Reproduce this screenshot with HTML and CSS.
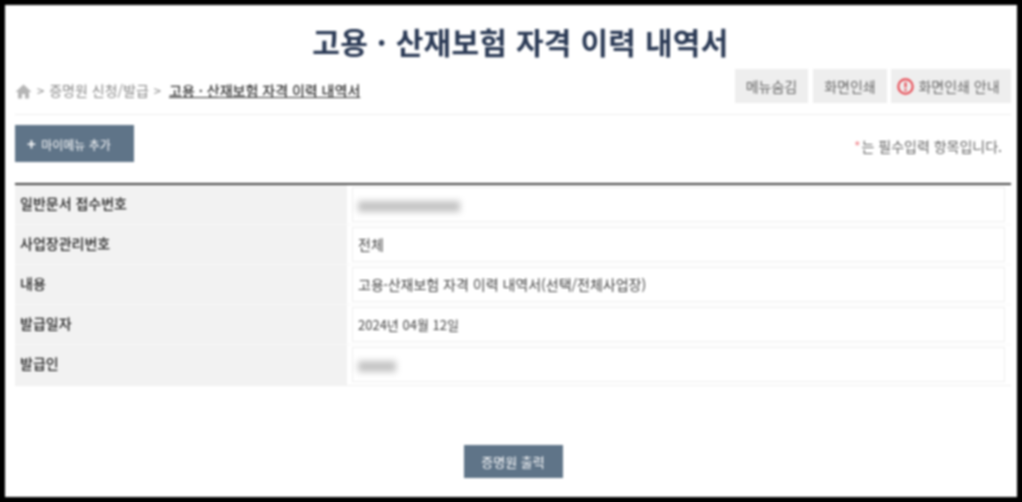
FILE: index.html
```html
<!DOCTYPE html>
<html lang="ko">
<head>
<meta charset="UTF-8">
<meta name="viewport" content="width=device-width, initial-scale=1.0">
<title>고용·산재보험 자격 이력 내역서</title>
<link rel="stylesheet" href="styles.css">
</head>
<body>

<div class="page">
  <h1 class="page-title">고용 · 산재보험 자격 이력 내역서</h1>

  <!-- 경로 + 상단 버튼 -->
  <div class="location-bar">
    <div class="location">
      <svg class="home-icon" width="17" height="15" viewBox="0 0 17 15">
        <path d="M8.5 0.5 L0.5 8 L3 8 L3 14.5 L7 14.5 L7 10 L10 10 L10 14.5 L14 14.5 L14 8 L16.5 8 Z" fill="#b5b5b5"/>
      </svg>
      <span class="sep">&gt;</span>
      <span>증명원 신청/발급</span>
      <span class="sep">&gt;</span>
      <strong class="current">고용 · 산재보험 자격 이력 내역서</strong>
    </div>
    <div class="top-buttons">
      <button class="gray-btn menu-btn">메뉴숨김</button>
      <button class="gray-btn print-btn">화면인쇄</button>
      <button class="gray-btn guide-btn">
        <svg width="17" height="17" viewBox="0 0 17 17">
          <circle cx="8.5" cy="8.5" r="7.2" fill="none" stroke="#e8404a" stroke-width="2"/>
          <path d="M8.5 4.2 V9.6" stroke="#e8404a" stroke-width="2"/>
          <path d="M8.5 11 V13" stroke="#e8404a" stroke-width="2"/>
        </svg>
        화면인쇄 안내
      </button>
    </div>
  </div>

  <div class="tool-row">
    <button class="blue-btn mymenu-btn"><span class="plus">+</span> 마이메뉴 추가</button>
    <p class="required-note"><span class="star">*</span>는 필수입력 항목입니다.</p>
  </div>

  <!-- 내역 -->
  <div class="info-table">
    <div class="row">
      <div class="label">일반문서 접수번호</div>
      <div class="cell"><div class="value"><span class="masked masked-long"></span></div></div>
    </div>
    <div class="row">
      <div class="label">사업장관리번호</div>
      <div class="cell"><div class="value">전체</div></div>
    </div>
    <div class="row">
      <div class="label">내용</div>
      <div class="cell"><div class="value">고용·산재보험 자격 이력 내역서(선택/전체사업장)</div></div>
    </div>
    <div class="row">
      <div class="label">발급일자</div>
      <div class="cell"><div class="value date">2024년 04월 12일</div></div>
    </div>
    <div class="row">
      <div class="label">발급인</div>
      <div class="cell"><div class="value"><span class="masked masked-short"></span></div></div>
    </div>
  </div>

  <div class="bottom-row">
    <button class="blue-btn issue-btn">증명원 출력</button>
  </div>
</div>

</body>
</html>
```

FILE: styles.css
```css
* {
  box-sizing: border-box;
}

html, body {
  margin: 0;
  height: 100%;
}

body {
  background: #000;
  padding: 5px;
  font-family: 'Noto Sans CJK KR', 'Noto Sans', sans-serif;
  color: #333;
  overflow: hidden;
}

.page {
  background: white;
  height: 492px;
  padding: 0 6px 0 10px;
  filter: blur(0.8px);
}

button {
  font-family: inherit;
  border: none;
  padding: 0;
  cursor: pointer;
}

.page-title {
  margin: 0;
  height: 64px;
  padding: 14px 0 0 15px;
  text-align: center;
  font-size: 30px;
  line-height: 44px;
  font-weight: 700;
  letter-spacing: 0.3px;
  color: #2b3a55;
}

.location-bar {
  display: flex;
  justify-content: space-between;
  align-items: flex-start;
  height: 46px;
  border-bottom: 1px solid #eee;
}

.location {
  display: flex;
  align-items: center;
  gap: 5px;
  height: 42px;
  font-size: 14px;
  color: #888;
}

.home-icon {
  margin-top: 2px;
}

.sep {
  font-size: 13px;
}

.location .current {
  margin-left: 3px;
  color: #333;
  font-weight: 500;
  text-decoration: underline;
}

.top-buttons {
  display: flex;
  gap: 4px;
}

.gray-btn {
  display: flex;
  align-items: center;
  justify-content: center;
  gap: 4px;
  height: 34px;
  background: #eee;
  color: #666;
  font-size: 14px;
}

.menu-btn { width: 73px; margin-right: 1px; }
.print-btn { width: 74px; }
.guide-btn { width: 120px; padding-right: 5px; }

.tool-row {
  display: flex;
  justify-content: space-between;
  align-items: flex-start;
  height: 68px;
  padding-top: 10px;
}

.blue-btn {
  background: #5f7488;
  color: white;
  font-size: 13px;
}

.mymenu-btn {
  width: 119px;
  height: 37px;
  padding-left: 12px;
  text-align: left;
  font-size: 12px;
}

.plus {
  font-weight: 700;
  font-size: 15px;
  margin-right: 2px;
}

.required-note {
  margin: 11px 9px 0 0;
  font-size: 14px;
  line-height: 20px;
  color: #666;
}

.star {
  color: #f08088;
  margin-right: 1px;
}

.info-table {
  border-top: 2px solid #444;
}

.row {
  display: flex;
  height: 40px;
  border-bottom: 1px solid #f8f8f8;
}

.row:last-child {
  height: 41px;
  border-bottom-color: #f0f0f0;
}

.label {
  width: 332px;
  background: #f2f2f2;
  padding-left: 5px;
  font-size: 14px;
  font-weight: 500;
  line-height: 37px;
  color: #222;
}

.cell {
  flex: 1;
  padding: 2px 6px 0 5px;
}

.value {
  height: 35px;
  border: 1px solid #eee;
  padding-left: 5px;
  font-size: 14px;
  line-height: 33px;
  color: #444;
}

.value.date {
  font-size: 13px;
}

.masked {
  display: inline-block;
  vertical-align: middle;
  height: 11px;
  background: #c4c4c4;
  filter: blur(3px);
}

.masked-long { width: 102px; }
.masked-short { width: 38px; }

.bottom-row {
  display: flex;
  justify-content: center;
  padding-top: 59px;
}

.issue-btn {
  width: 99px;
  height: 33px;
}
```
